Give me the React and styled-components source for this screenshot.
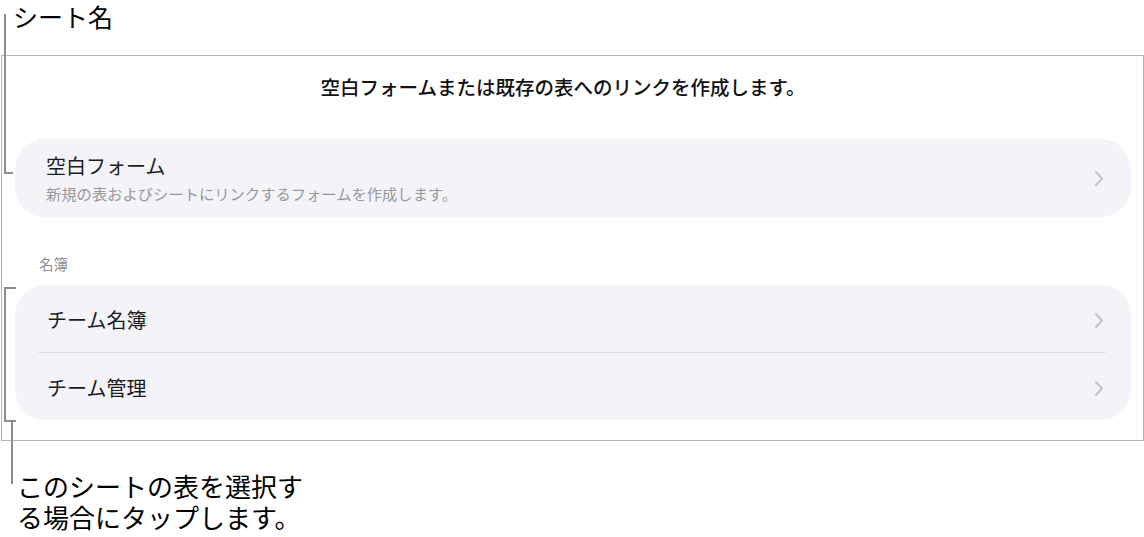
import React from 'react';
import styled, { createGlobalStyle } from 'styled-components';

const GlobalStyle = createGlobalStyle`
    html, body {
        margin: 0;
        padding: 0;
        background: #ffffff;
    }
    body {
        font-family: "Noto Sans CJK JP", "Noto Sans", sans-serif;
        color: #000000;
    }
`;

const rosterRows = ['チーム名簿', 'チーム管理'];

const Chevron = () => (
    <ChevronSvg viewBox="0 0 10 17" width="10" height="17">
        <path d="M2 2 L8 8.5 L2 15" />
    </ChevronSvg>
);

const App = () => (
    <Page>
        <GlobalStyle />
        <Caption>シート名</Caption>

        <Frame>
            <Heading>空白フォームまたは既存の表へのリンクを作成します。</Heading>

            <Card>
                <BlankRow>
                    <RowText>
                        <RowTitle>空白フォーム</RowTitle>
                        <RowSubtitle>新規の表およびシートにリンクするフォームを作成します。</RowSubtitle>
                    </RowText>
                    <Chevron />
                </BlankRow>
            </Card>

            <SectionLabel>名簿</SectionLabel>

            <Card>
                {rosterRows.map((name, i) => (
                    <React.Fragment key={name}>
                        {i > 0 && <Divider />}
                        <TableRow>
                            <RowTitle>{name}</RowTitle>
                            <Chevron />
                        </TableRow>
                    </React.Fragment>
                ))}
            </Card>
        </Frame>

        <BottomCaption>
            このシートの表を選択す<br />
            る場合にタップします。
        </BottomCaption>

        <TopBracket />
        <SideBracket />
        <Connector />
    </Page>
);

export default App;

const Page = styled.div`
    position: relative;
    width: 1144px;
    height: 537px;
    overflow: hidden;
`;

const Caption = styled.div`
    height: 32px;
    padding-left: 13px;
    font-size: 25px;
    line-height: 32px;
    color: #000;
`;

const BottomCaption = styled(Caption)`
    height: auto;
    margin-top: 29px;
    padding-left: 17px;
    font-size: 26px;
    line-height: 31px;
`;

const Frame = styled.div`
    box-sizing: border-box;
    display: flex;
    flex-direction: column;
    width: 1143px;
    height: 386px;
    margin: 23px 0 0 1px;
    padding: 0 12px 0 13px;
    border: 1px solid #b4b4b4;
`;

const Heading = styled.div`
    padding: 19px 20px 0 0;
    margin-bottom: 40px;
    text-align: center;
    font-size: 19.5px;
    line-height: 24px;
    font-weight: 500;
    color: #111;
`;

const Card = styled.div`
    display: flex;
    flex-direction: column;
    background: #f4f4f8;
    border-radius: 30px;
`;

const BlankRow = styled.div`
    display: flex;
    align-items: center;
    justify-content: space-between;
    height: 78px;
    padding: 0 27px 0 31px;
`;

const TableRow = styled.div`
    display: flex;
    align-items: center;
    justify-content: space-between;
    height: 67px;
    padding: 3px 27px 0 32px;
    box-sizing: border-box;
`;

const RowText = styled.div`
    display: flex;
    flex-direction: column;
    gap: 5px;
`;

const RowTitle = styled.div`
    font-size: 20px;
    line-height: 24px;
    color: #1c1c1e;
`;

const RowSubtitle = styled.div`
    font-size: 15.3px;
    line-height: 20px;
    color: #98989d;
`;

const SectionLabel = styled.div`
    margin: 38px 0 12px;
    padding-left: 24px;
    font-size: 14.5px;
    line-height: 18px;
    color: #8e8e93;
`;

const Divider = styled.div`
    height: 1px;
    margin: 0 25px 0 23px;
    background: #dedee3;
`;

const ChevronSvg = styled.svg`
    flex-shrink: 0;
    fill: none;
    stroke: #c2c2c7;
    stroke-width: 2;
    stroke-linecap: round;
    stroke-linejoin: round;
`;

const Bracket = styled.div`
    position: absolute;
    box-sizing: border-box;
    border: 0 solid #8c8c8c;
`;

const TopBracket = styled(Bracket)`
    left: 4px;
    top: 14px;
    width: 9px;
    height: 160px;
    border-left-width: 2px;
    border-bottom-width: 2px;
`;

const SideBracket = styled(Bracket)`
    left: 4px;
    top: 287px;
    width: 12px;
    height: 135px;
    border-left-width: 2px;
    border-top-width: 2px;
    border-bottom-width: 2px;
`;

const Connector = styled(Bracket)`
    left: 11px;
    top: 422px;
    width: 2px;
    height: 62px;
    background: #8c8c8c;
`;
